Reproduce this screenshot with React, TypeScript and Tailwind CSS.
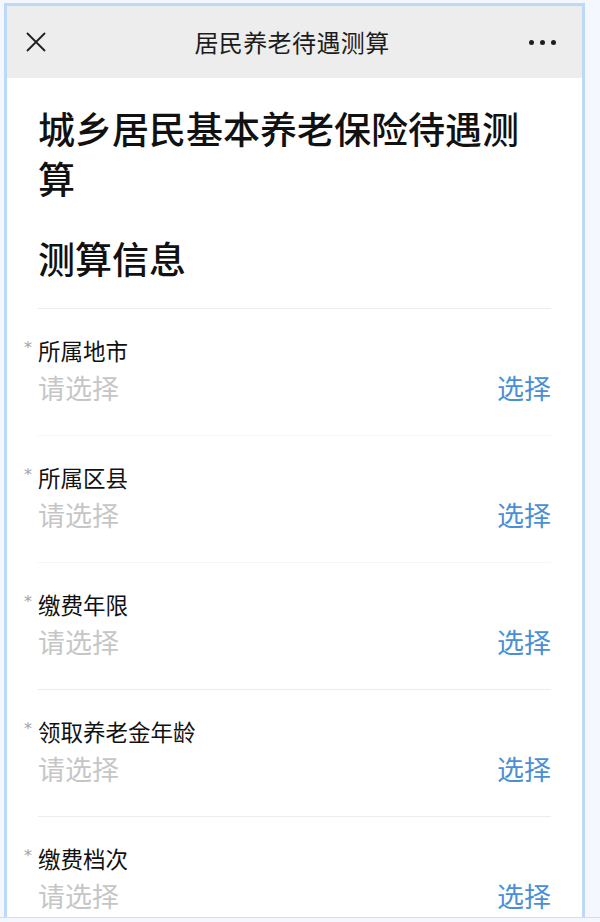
import React from 'react';

const fields = ['所属地市', '所属区县', '缴费年限', '领取养老金年龄', '缴费档次'];

const FieldRow: React.FC<{ label: string; faint: boolean }> = ({ label, faint }) => (
  <div className={`border-b ${faint ? 'border-[#f6f6f6]' : 'border-[#ececec]'} pt-[26px] pb-[28px]`}>
    <div className="relative h-[30px] flex items-center text-[22.5px] leading-[30px] text-[#111]">
      <span
        className="absolute -left-[14px] top-[5px] text-[16px] leading-[16px] text-[#a9a2a2]"
        style={{ fontFamily: '"DejaVu Sans", sans-serif' }}
      >
        *
      </span>
      {label}
    </div>
    <div className="mt-[4px] h-[38px] flex items-center justify-between text-[27px] leading-[38px]">
      <span className="text-[#c6c6c6]">请选择</span>
      <span className="text-[#4a8fd6]">选择</span>
    </div>
  </div>
);

const App: React.FC = () => {
  return (
    <div
      className="w-[600px] h-[922px] overflow-hidden bg-[#f4f8fe]"
      style={{ fontFamily: '"Noto Sans CJK SC", "Noto Sans", sans-serif' }}
    >
      <div className="pt-[3px] pl-[4px]">
        <div className="w-[581px] h-[914px] overflow-hidden border-[3px] border-b-0 border-[#bcdaf6] bg-white">
          {/* top bar */}
          <div className="h-[72px] bg-[#ededed] flex items-center justify-between px-[17px]">
            <svg width="22" height="22" viewBox="0 0 22 22" className="ml-[1px]">
              <path d="M2 2 L20 20 M20 2 L2 20" stroke="#1f1f1f" strokeWidth="1.8" fill="none" />
            </svg>
            <div className="text-[24px] text-[#1c1c1c] tracking-[0.4px] ml-[8px]">居民养老待遇测算</div>
            <div className="flex items-center gap-[6px] mr-[9px]">
              <span className="w-[5px] h-[5px] rounded-full bg-[#1f1f1f]" />
              <span className="w-[5px] h-[5px] rounded-full bg-[#1f1f1f]" />
              <span className="w-[5px] h-[5px] rounded-full bg-[#1f1f1f]" />
            </div>
          </div>

          <div className="px-[31px]">
            <h1 className="pt-[25px] text-[37px] leading-[50px] font-medium text-[#111]">
              城乡居民基本养老保险待遇测算
            </h1>
            <h2 className="mt-[30px] text-[37px] leading-[50px] font-medium text-[#111] pb-[25px] border-b border-[#ececec]">
              测算信息
            </h2>
            {fields.map((f, i) => (
              <FieldRow key={f} label={f} faint={i < 2} />
            ))}
          </div>
        </div>
        <div className="-ml-[4px] w-[600px] h-[1px] bg-[#dcdcdc]" />
      </div>
    </div>
  );
};

export default App;
